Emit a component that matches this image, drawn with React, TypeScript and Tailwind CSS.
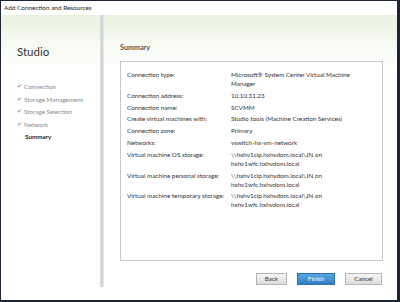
export default function App() {
  const steps = [
    { label: "Connection", done: true },
    { label: "Storage Management", done: true },
    { label: "Storage Selection", done: true },
    { label: "Network", done: true },
    { label: "Summary", done: false },
  ];

  const rows: [string, string[]][] = [
    ["Connection type:", ["Microsoft\u00ae System Center Virtual Machine", "Manager"]],
    ["Connection address:", ["10.10.31.23"]],
    ["Connection name:", ["SCVMM"]],
    ["Create virtual machines with:", ["Studio tools (Machine Creation Services)"]],
    ["Connection zone:", ["Primary"]],
    ["Networks:", ["vswitch-hx-vm-network"]],
    ["Virtual machine OS storage:", ["\\\\hxhv1cip.hxhvdom.local\\JN on", "hxhv1wfc.hxhvdom.local"]],
    ["Virtual machine personal storage:", ["\\\\hxhv1cip.hxhvdom.local\\JN on", "hxhv1wfc.hxhvdom.local"]],
    ["Virtual machine temporary storage:", ["\\\\hxhv1cip.hxhvdom.local\\JN on", "hxhv1wfc.hxhvdom.local"]],
  ];

  return (
    <div className="w-[400px] h-[302px] flex flex-col bg-white border-l border-t border-r-[3px] border-b-2 border-[#1b2536] font-['Lato','Noto_Sans',sans-serif] overflow-hidden">
      {/* Title bar */}
      <div className="h-[14px] flex items-center pl-[3px] text-[6.4px] text-[#222] bg-white">
        Add Connection and Resources
      </div>

      {/* Body */}
      <div className="flex-1 flex bg-[linear-gradient(to_bottom,#eaf2df_0px,#f6f9f0_25px,#ffffff_55px)]">
        {/* Sidebar */}
        <div className="w-[99px] flex flex-col pl-[16px] pt-[29px]">
          <div className="text-[11.5px] text-[#333] leading-[16px]">Studio</div>
          <div className="mt-[22px] flex flex-col gap-y-[3.5px]">
            {steps.map((s) => (
              <div
                key={s.label}
                className={
                  "flex items-center text-[6.3px] leading-[9px] " +
                  (s.done ? "text-[#8a8a8a]" : "text-[#222] font-bold")
                }
              >
                <span className="w-[7px] text-[5.5px] text-[#9a9a9a]">{s.done ? "\u2714" : ""}</span>
                <span className={s.done ? "" : "pl-[1px]"}>{s.label}</span>
              </div>
            ))}
          </div>
        </div>

        {/* Divider shadow */}
        <div className="w-[4px] h-[272px] bg-[linear-gradient(to_right,#e4e6e8,#c9cdd2,#eef0f2)]" />

        {/* Main */}
        <div className="flex-1 flex flex-col pl-[16px] pr-[14px] pt-[27px]">
          <div className="text-[7.2px] font-bold text-[#555] leading-[12px]">Summary</div>
          <div className="mt-[7px] h-[200px] border border-[#c8c8c8] bg-white pl-[6px] pt-[8px]">
            <div className="grid grid-cols-[104px_1fr] gap-y-[2.8px] text-[6.3px] leading-[9px] text-[#333]">
              {rows.map(([label, vals]) => (
                <div key={label} className="contents">
                  <div className="whitespace-nowrap">{label}</div>
                  <div>
                    {vals.map((v) => (
                      <div key={v} className="whitespace-nowrap">{v}</div>
                    ))}
                  </div>
                </div>
              ))}
            </div>
          </div>

          {/* Buttons */}
          <div className="mt-[12px] flex justify-end pr-[1px] text-[6.3px]">
            <button className="w-[31px] h-[12px] border border-[#b5b5b5] bg-[linear-gradient(to_bottom,#f6f6f6,#dcdcdc)] text-[#333]">
              Back
            </button>
            <button className="ml-[10px] w-[38px] h-[12px] border border-[#2d6fa8] bg-[linear-gradient(to_bottom,#5aa6e0,#2f7fc2)] text-white">
              Finish
            </button>
            <button className="ml-[10px] w-[37px] h-[12px] border border-[#b5b5b5] bg-[linear-gradient(to_bottom,#f6f6f6,#dcdcdc)] text-[#333]">
              Cancel
            </button>
          </div>
        </div>
      </div>
    </div>
  );
}
